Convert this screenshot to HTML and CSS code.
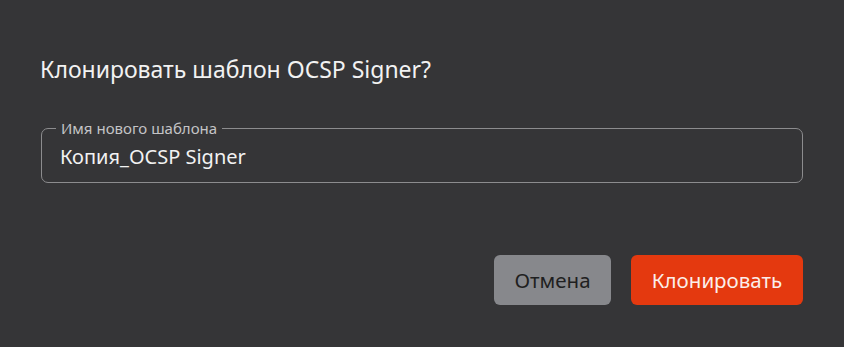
FILE: index.html
```html
<!DOCTYPE html>
<html lang="ru">
<head>
<meta charset="utf-8">
<link rel="stylesheet" href="styles.css">
</head>
<body>
<div class="dialog">
  <h1 class="title">Клонировать шаблон OCSP Signer?</h1>
  <div class="field">
    <span class="label">Имя нового шаблона</span>
    <div class="value">Копия_OCSP Signer</div>
  </div>
  <div class="actions">
    <button class="btn btn-cancel">Отмена</button>
    <button class="btn btn-primary">Клонировать</button>
  </div>
</div>
</body>
</html>
```
FILE: styles.css
```css
html, body {
  margin: 0;
  padding: 0;
  background: #333335;
}
body {
  width: 844px;
  height: 347px;
  overflow: hidden;
  font-family: "Noto Sans", "Open Sans", sans-serif;
}
.dialog {
  box-sizing: border-box;
  width: 844px;
  height: 347px;
  background: #353537;
  padding: 53px 41px 0 40px;
  display: flex;
  flex-direction: column;
}
.title {
  margin: 0;
  font-size: 23px;
  font-weight: 400;
  line-height: 32px;
  color: #f2f2f2;
}
.field {
  position: relative;
  box-sizing: border-box;
  height: 55px;
  margin: 43px 0 0 1px;
  border: 1px solid #8c8c8e;
  border-radius: 7px;
  display: flex;
  align-items: center;
  padding: 2px 0 0 18px;
}
.label {
  position: absolute;
  left: 14px;
  top: -10px;
  padding: 0 5px;
  background: #353537;
  font-size: 15px;
  line-height: 18px;
  color: #c4c4c6;
}
.value {
  font-size: 20px;
  line-height: 28px;
  color: #f2f2f2;
}
.actions {
  margin-top: 72px;
  display: flex;
  justify-content: flex-end;
  gap: 20px;
}
.btn {
  height: 50px;
  border: none;
  border-radius: 6px;
  font-family: "Noto Sans", "Open Sans", sans-serif;
  font-size: 20.5px;
  padding: 0;
}
.btn-cancel {
  width: 117px;
  background: #87888c;
  color: #1f1f21;
}
.btn-primary {
  width: 172px;
  background: #e4390f;
  color: #fbeeea;
}
```
